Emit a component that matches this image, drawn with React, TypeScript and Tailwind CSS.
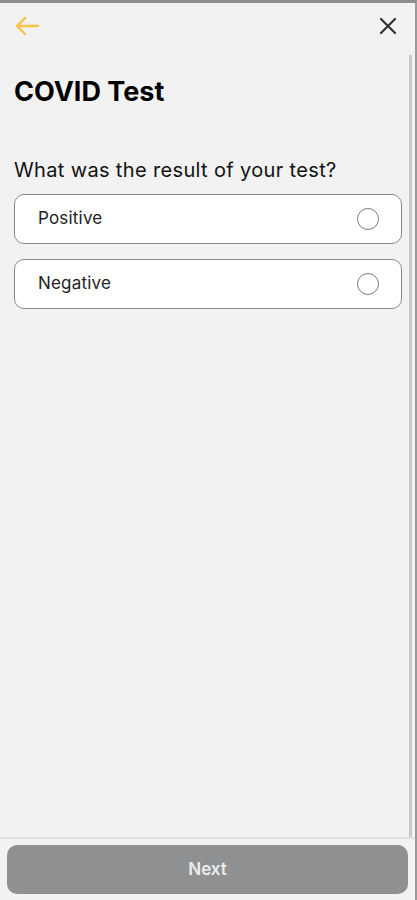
import { useState } from 'react';

const options = ['Positive', 'Negative'];

const App = () => {
  const [selected, setSelected] = useState<string | null>(null);

  return (
    <div className="w-[417px] h-[900px] bg-[#f2f2f2] flex flex-col border-t-[3px] border-t-[#8c8c8c] border-r-2 border-r-[#9a9a9a] font-['Inter','Liberation_Sans',Arial,sans-serif] text-black overflow-hidden">
      {/* Top bar */}
      <div className="h-[46px] flex items-center justify-between pl-[14px] pr-[18px] shrink-0">
        <svg width="26" height="22" viewBox="0 0 26 22" fill="none" stroke="#f7c446" strokeWidth="2.4" strokeLinecap="round" strokeLinejoin="round">
          <path d="M24 11H3" />
          <path d="M11 3L3 11l8 8" />
        </svg>
        <svg width="18" height="18" viewBox="0 0 18 18" fill="none" stroke="#333" strokeWidth="2.2" strokeLinecap="round">
          <path d="M2 2l14 14M16 2L2 16" />
        </svg>
      </div>

      {/* Body */}
      <div className="flex-1 flex min-h-0">
        <div className="flex-1 pl-[14px] pr-[4px]">
          <h1 className="text-[27px] font-bold leading-none mt-[29px] tracking-[0px]">COVID Test</h1>
          <p className="text-[20px] leading-none mt-[55px] text-[#111] tracking-[0.35px]">What was the result of your test?</p>
          <div className="mt-[14px] flex flex-col gap-[15px]">
            {options.map((opt) => (
              <button
                key={opt}
                onClick={() => setSelected(opt)}
                className="h-[50px] w-full bg-white border border-[#8a8a8a] rounded-[10px] flex items-center justify-between pl-[23px] pr-[22px] text-left"
              >
                <span className="text-[17px] text-[#222] tracking-[0.2px]">{opt}</span>
                <span className="w-[22px] h-[22px] rounded-full border-[1.5px] border-[#7a7a7a] flex items-center justify-center">
                  {selected === opt && <span className="w-[12px] h-[12px] rounded-full bg-[#f7c446]" />}
                </span>
              </button>
            ))}
          </div>
        </div>
        {/* Scrollbar */}
        <div className="w-[9px] flex justify-center pt-[6px] shrink-0">
          <div className="w-[3px] h-full bg-[#c8c8c8]" />
        </div>
      </div>

      {/* Footer */}
      <div className="shrink-0 border-t-2 border-t-[#e0e0e0] px-[7px] pt-[6px] pb-[6px]">
        <button className="w-full h-[49px] rounded-[10px] bg-[#8e9091] text-[#ececec] text-[17px] font-semibold">
          Next
        </button>
      </div>
    </div>
  );
};

export default App;
